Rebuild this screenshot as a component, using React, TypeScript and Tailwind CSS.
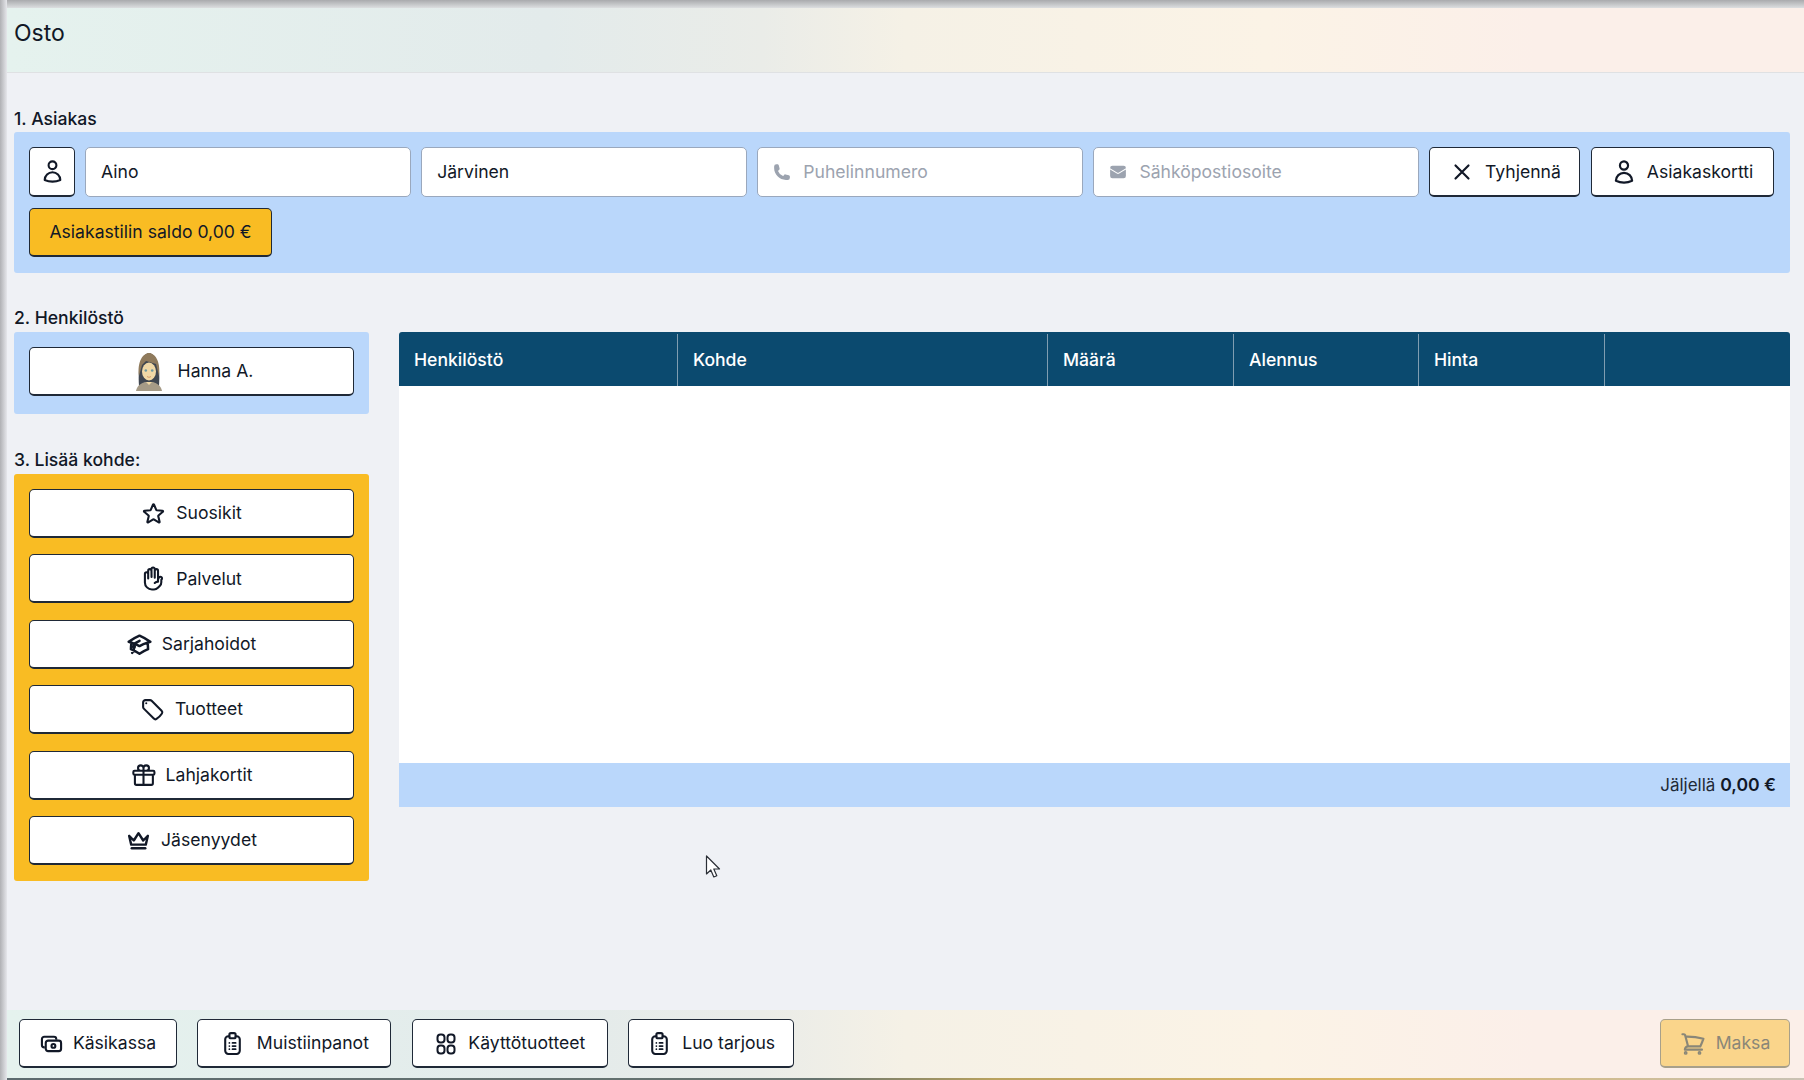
import type { ReactNode } from "react";
import {
  HiOutlineUser,
  HiOutlineXMark,
  HiOutlineStar,
  HiOutlineHandRaised,
  HiOutlineAcademicCap,
  HiOutlineTag,
  HiOutlineGift,
  HiOutlineShoppingCart,
  HiPhone,
  HiEnvelope,
} from "react-icons/hi2";

const barGradient =
  "bg-[linear-gradient(90deg,#e5f2ee_0%,#e3ebeb_30%,#eaece8_42%,#f5f1e6_50%,#fbf3e6_70%,#fbefe9_85%,#fbefe9_100%)]";

function CashIcon() {
  return (
    <svg viewBox="0 0 24 24" className="w-[23px] h-[23px]" fill="none" stroke="currentColor" strokeWidth="2.200" strokeLinejoin="round">
      <path d="M5 16H4.500A2.500 2.500 0 0 1 2 13.500v-6A2.500 2.500 0 0 1 4.500 5h10A2.500 2.500 0 0 1 17 7.500V8" />
      <rect x="6" y="9" width="16" height="11" rx="2.500" />
      <circle cx="14" cy="14.500" r="2" />
    </svg>
  );
}

function FourIcon() {
  return (
    <svg viewBox="0 0 24 24" className="w-[24px] h-[24px]" fill="none" stroke="currentColor" strokeWidth="2">
      <rect x="3.500" y="2.500" width="7" height="8" rx="3" />
      <rect x="13.500" y="2.500" width="7" height="8" rx="3" />
      <rect x="3.500" y="13.500" width="7" height="8" rx="3" />
      <rect x="13.500" y="13.500" width="7" height="8" rx="3" />
    </svg>
  );
}

function ClipboardIcon() {
  return (
    <svg viewBox="0 0 24 24" className="w-[25px] h-[25px]" fill="none" stroke="currentColor" strokeWidth="2" strokeLinejoin="round" strokeLinecap="round">
      <path d="M9 5H8a3 3 0 0 0-3 3v11a3 3 0 0 0 3 3h8a3 3 0 0 0 3-3V8a3 3 0 0 0-3-3h-1" />
      <rect x="9" y="2" width="6" height="5" rx="1.500" />
      <path d="M9 11.500h.01M9 14.500h.01M9 17.500h.01M12 11.500h3M12 14.500h3M12 17.500h3" strokeWidth="1.700" />
    </svg>
  );
}

function CrownIcon() {
  return (
    <svg viewBox="0 0 24 24" className="w-[25px] h-[25px]" fill="none" stroke="currentColor" strokeWidth="2.300" strokeLinejoin="round" strokeLinecap="round">
      <path d="M3 7.500l4.500 4.500L12 5l4.500 7L21 7.500 19 16H5z" />
      <path d="M5.500 19.500h13" />
    </svg>
  );
}

function Avatar() {
  return (
    <svg viewBox="0 0 28 40" className="w-[28px] h-[40px]">
      <path d="M4 34C3 20 4 3 14 1c10 2 11 19 10 33z" fill="#3f4650" />
      <path d="M4 24C2 10 8 1 14 1c6 0 12 9 10 23l-3-12-10-3-4 4z" fill="#8f7a5c" />
      <ellipse cx="14" cy="19.500" rx="7" ry="9" fill="#f0d8a6" />
      <circle cx="10.800" cy="18.500" r="1.300" fill="#6f9aa0" />
      <circle cx="17.200" cy="18.500" r="1.300" fill="#6f9aa0" />
      <path d="M12 24.500c1.500 1 2.500 1 4 0" stroke="#c98a5a" strokeWidth="0.800" fill="none" />
      <path d="M1 39c1-6 6-8 9-9h8c3 1 8 3 9 9z" fill="#a59a86" />
      <path d="M11 30l3 3 3-3z" fill="#f0d8a6" />
    </svg>
  );
}

function Btn({ icon, label, className }: { icon: ReactNode; label: string; className: string }) {
  return (
    <button className={`flex items-center justify-center rounded-[5px] border border-[#1f2937] border-b-[2px] bg-white h-[49px] pt-[1px] text-[17.600px] text-[#111827] ${className}`}>
      {icon}
      {label}
    </button>
  );
}

const iconClass = "w-[25px] h-[25px] mr-[10px]";

const addItems = [
  { label: "Suosikit", icon: <HiOutlineStar strokeWidth={2} className={iconClass} /> },
  { label: "Palvelut", icon: <HiOutlineHandRaised strokeWidth={2} className={iconClass} /> },
  { label: "Sarjahoidot", icon: <HiOutlineAcademicCap strokeWidth={2.400} className={iconClass} /> },
  { label: "Tuotteet", icon: <HiOutlineTag strokeWidth={2} className={iconClass} /> },
  { label: "Lahjakortit", icon: <HiOutlineGift strokeWidth={2} className={iconClass} /> },
  { label: "Jäsenyydet", icon: <span className="mr-[10px]"><CrownIcon /></span> },
];

const columns = [
  { label: "Henkilöstö", width: "w-[279px]" },
  { label: "Kohde", width: "w-[370px]" },
  { label: "Määrä", width: "w-[186px]" },
  { label: "Alennus", width: "w-[185px]" },
  { label: "Hinta", width: "w-[186px]" },
  { label: "", width: "flex-1" },
];

export default function App() {
  return (
    <div className="relative flex h-[1080px] w-full overflow-hidden bg-[#eff1f5] text-[#111827] [font-family:Inter,sans-serif]">
      <div className="w-[7px] shrink-0 bg-[linear-gradient(90deg,#b0b1b4,#e6e7eb)]" />
      <div className="flex flex-1 flex-col">
        <div className="h-[8px] bg-[linear-gradient(180deg,#a9aaad,#dcdee0)]" />
        <header className={`flex h-[65px] items-start border-b border-[#dfe1e3] pl-[7px] pt-[10px] text-[23px] leading-[30px] ${barGradient}`}>
          Osto
        </header>

        <div className="flex flex-col pl-[7px] pr-[14px] pt-[33px]">
          <h2 className="mb-[2px] pt-[1px] text-[17.600px] font-medium leading-[23px]">1. Asiakas</h2>
          <section className="flex h-[141px] flex-col gap-[11px] rounded-[3px] bg-[#bad7fb] px-[15px] pt-[15px]">
            <div className="flex gap-[10.100px]">
              <button className="flex h-[50px] w-[46px] shrink-0 items-center justify-center rounded-[5px] border border-[#1f2937] border-b-[2px] bg-white">
                <HiOutlineUser strokeWidth={2} className="h-[25px] w-[25px]" />
              </button>
              <input readOnly value="Aino" className="h-[50px] w-[326px] rounded-[5px] border border-[#9aa8bd] bg-white px-[15px] pb-[1px] text-[17.600px] outline-none" />
              <input readOnly value="Järvinen" className="h-[50px] w-[326px] rounded-[5px] border border-[#9aa8bd] bg-white px-[15px] pb-[1px] text-[17.600px] outline-none" />
              <div className="flex h-[50px] w-[326px] items-center gap-[12px] rounded-[5px] border border-[#9aa8bd] bg-white px-[15px]">
                <HiPhone className="h-[18px] w-[18px] shrink-0 text-[#9ca3af]" />
                <input readOnly placeholder="Puhelinnumero" className="min-w-0 flex-1 bg-transparent pt-[1px] text-[17.600px] outline-none placeholder:text-[#9ca3af]" />
              </div>
              <div className="flex h-[50px] w-[326px] items-center gap-[12px] rounded-[5px] border border-[#9aa8bd] bg-white px-[15px]">
                <HiEnvelope className="h-[18px] w-[18px] shrink-0 text-[#9ca3af]" />
                <input readOnly placeholder="Sähköpostiosoite" className="min-w-0 flex-1 bg-transparent pt-[1px] text-[17.600px] outline-none placeholder:text-[#9ca3af]" />
              </div>
              <Btn className="!h-[50px] w-[151px]" label="Tyhjennä" icon={<HiOutlineXMark strokeWidth={2} className="mr-[10px] h-[26px] w-[26px]" />} />
              <Btn className="!h-[50px] w-[183px]" label="Asiakaskortti" icon={<HiOutlineUser strokeWidth={2} className="mr-[10px] h-[26px] w-[26px]" />} />
            </div>
            <button className="h-[49px] w-[243px] rounded-[5px] border border-[#1f2937] border-b-[2px] bg-[#f9bc23] pt-[1px] text-[17.600px]">
              Asiakastilin saldo 0,00 €
            </button>
          </section>

          <div className="mt-[33px] flex gap-[30px]">
            <aside className="flex w-[355px] shrink-0 flex-col">
              <h2 className="mb-[2px] text-[17.600px] font-medium leading-[24px]">2. Henkilöstö</h2>
              <div className="rounded-[3px] bg-[#bad7fb] p-[15px] pb-[18px]">
                <Btn className="w-full pl-[5px]" label="Hanna A." icon={<span className="mr-[15px]"><Avatar /></span>} />
              </div>
              <h2 className="mb-[2px] mt-[34px] text-[17.600px] font-medium leading-[24px]">3. Lisää kohde:</h2>
              <div className="flex flex-col gap-[16.400px] rounded-[3px] bg-[#f9bc23] p-[15px] pb-[16px]">
                {addItems.map((item) => (
                  <Btn key={item.label} className="w-full" label={item.label} icon={item.icon} />
                ))}
              </div>
            </aside>

            <section className="mt-[26px] flex h-[475px] flex-1 flex-col">
              <div className="flex h-[54px] rounded-t-[3px] bg-[#0b4a6f] pt-[2px] text-[17.600px] font-medium text-white">
                {columns.map((col, i) => (
                  <div key={i} className={`flex items-center px-[15px] ${col.width} ${i < 5 ? "border-r border-[#7f9db1]" : ""}`}>
                    {col.label}
                  </div>
                ))}
              </div>
              <div className="flex-1 bg-white" />
              <div className="flex h-[44px] items-center justify-end bg-[#bad7fb] pl-[15px] pr-[14px] pt-[1px]">
                <span className="text-[17px] text-[#1f2937]">Jäljellä&nbsp;</span>
                <span className="text-[17.600px] font-semibold">0,00 €</span>
              </div>
            </section>
          </div>
        </div>

        <footer className={`mt-auto flex h-[68px] items-start pl-[12px] pr-[14px] pt-[9px] ${barGradient}`}>
          <div className="flex gap-[20.400px]">
            <Btn className="w-[158px]" label="Käsikassa" icon={<span className="mr-[10px]"><CashIcon /></span>} />
            <Btn className="w-[194px]" label="Muistiinpanot" icon={<span className="mr-[12px]"><ClipboardIcon /></span>} />
            <Btn className="w-[196px]" label="Käyttötuotteet" icon={<span className="mr-[10px]"><FourIcon /></span>} />
            <Btn className="w-[166px]" label="Luo tarjous" icon={<span className="mr-[10px]"><ClipboardIcon /></span>} />
          </div>
          <button className="ml-auto flex h-[49px] w-[130px] items-center justify-center rounded-[5px] border border-[#a8a08a] border-b-[2px] bg-[#fad58b] pt-[1px] text-[17.600px] text-[#8a8778]">
            <HiOutlineShoppingCart strokeWidth={2} className="mr-[10px] h-[26px] w-[26px]" />
            Maksa
          </button>
        </footer>
        <div className="h-[2px] bg-[linear-gradient(90deg,#5d6b6f_0%,#66736f_45%,#b9a25e_55%,#d9b565_75%,#c9c2b4_100%)]" />
      </div>

      {/* mouse pointer caught in the screenshot */}
      <svg viewBox="0 0 16 26" className="absolute left-[705px] top-[855px] h-[26px] w-[16px]">
        <path d="M1.500 1v18l4.300-4 3 7 3-1.300-3-6.700h5.700z" fill="#fff" stroke="#2b2f36" strokeWidth="1.200" strokeLinejoin="round" />
      </svg>
    </div>
  );
}
